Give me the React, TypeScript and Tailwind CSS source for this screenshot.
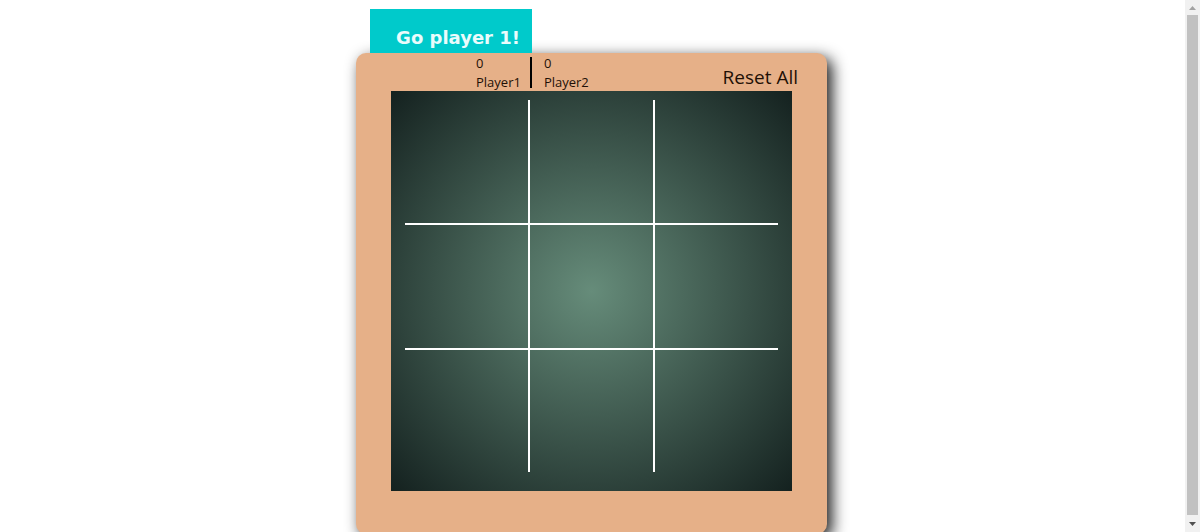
import { useState } from "react";

const cells = [
  "border-r-2 border-b-2",
  "border-r-2 border-b-2",
  "border-b-2",
  "border-r-2 border-b-2",
  "border-r-2 border-b-2",
  "border-b-2",
  "border-r-2",
  "border-r-2",
  "",
];

function Score({ name, value }: { name: string; value: number }) {
  return (
    <div className="text-[13px] leading-[19px]">
      <p>{value}</p>
      <p>{name}</p>
    </div>
  );
}

function ScrollBar() {
  return (
    <div className="flex h-full w-[15px] shrink-0 flex-col items-center bg-[#f1f1f1]" aria-hidden="true">
      <svg className="h-[15px] w-[15px] shrink-0" viewBox="0 0 15 15">
        <path d="M4 10 L7.5 6 L11 10 Z" fill="#a3a3a3" />
      </svg>
      <div className="w-[11px] flex-1 bg-[#c1c1c1]" />
      <svg className="h-[17px] w-[15px] shrink-0" viewBox="0 0 15 17">
        <path d="M4 7 L7.5 11 L11 7 Z" fill="#505050" />
      </svg>
    </div>
  );
}

export default function App() {
  const [marks, setMarks] = useState<string[]>(Array(9).fill(""));
  const [player, setPlayer] = useState(1);

  const play = (index: number) => {
    if (marks[index]) return;
    setMarks(marks.map((mark, i) => (i === index ? (player === 1 ? "X" : "O") : mark)));
    setPlayer(player === 1 ? 2 : 1);
  };

  const reset = () => {
    setMarks(Array(9).fill(""));
    setPlayer(1);
  };

  return (
    <div className="flex h-screen overflow-hidden bg-white font-['Segoe_UI','Open_Sans',sans-serif] text-[#1f1006]">
      <main className="flex flex-1 justify-center overflow-hidden pt-[9px] pr-0.5">
        <div className="flex w-full max-w-[471px] shrink-0 flex-col">
          <h1 className="relative z-10 ml-3.5 flex h-11 w-[162px] shrink-0 items-end justify-end bg-[#00cacb] pr-3 pb-px font-['Verdana','DejaVu_Sans',sans-serif] text-lg font-bold text-[#eafcfc]">
            Go player {player}!
          </h1>
          <section className="shrink-0 rounded-[10px] bg-[#e6b088] px-[35px] pb-[43px] shadow-[5px_5px_15px_rgba(0,0,0,0.9)]">
            <header className="flex h-[38px] items-start pl-[85px]">
              <div className="flex gap-2 pt-px">
                <Score name="Player1" value={0} />
                <div className="mt-[3px] mr-1 ml-px h-[31px] w-0.5 bg-black" />
                <Score name="Player2" value={0} />
              </div>
              <button type="button" onClick={reset} className="-mr-1.5 ml-auto pt-2.5 text-[19px] leading-7">
                Reset All
              </button>
            </header>
            <div className="bg-[radial-gradient(circle_at_center,#668c7a,#14211f)] px-3.5 pt-[9px] pb-[19px]">
              <div className="grid grid-cols-[125px_125px_1fr] grid-rows-[125px_125px_122px]">
                {cells.map((borders, i) => (
                  <button
                    key={i}
                    type="button"
                    aria-label={`Square ${i + 1}`}
                    onClick={() => play(i)}
                    className={`border-white text-6xl text-white ${borders}`}
                  >
                    {marks[i]}
                  </button>
                ))}
              </div>
            </div>
          </section>
        </div>
      </main>
      <ScrollBar />
    </div>
  );
}
